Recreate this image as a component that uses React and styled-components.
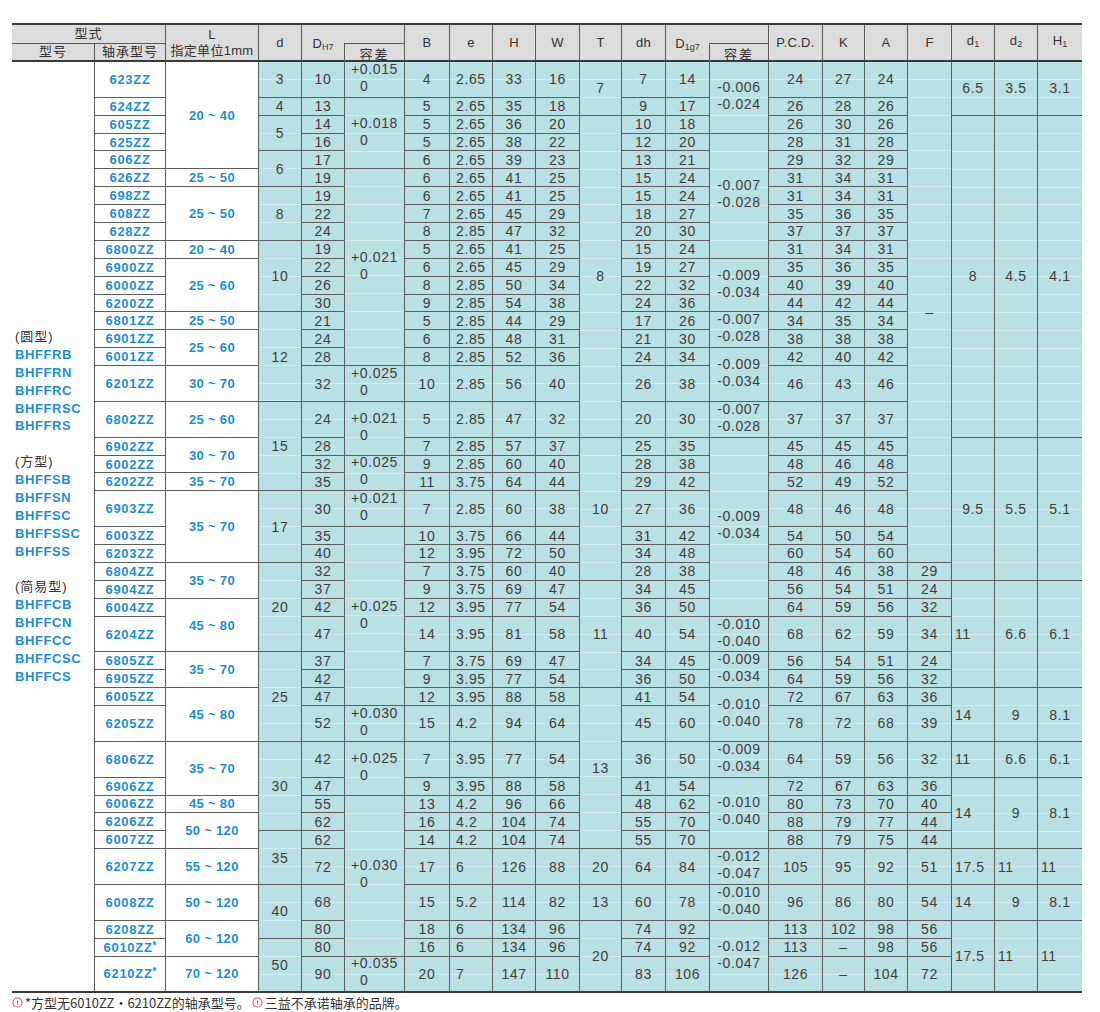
import React from 'react';
import styled, { createGlobalStyle } from 'styled-components';
import { CircleAlert } from 'lucide-react';

const GlobalStyle = createGlobalStyle`
  body {
    margin: 0;
    background: #fff;
    font-family: "Liberation Sans", "Noto Sans CJK SC", sans-serif;
  }
`;

// column widths in px, left to right (型号 … H1)
const COLS = [83, 71, 93, 43, 43, 60, 45, 43, 43, 44, 42, 44, 44, 59, 54, 42, 43, 44, 43, 43, 44];
const TRACKS = COLS.map((w, i) => `${i < COLS.length - 1 ? w - 1 : w}px`).join(' ');

const UNIT = 16.9; // one data line, the 1px gap makes it 17.9
const DOUBLES = [1, 17, 18, 22, 28, 32, 33, 38, 39, 42];

const START = [0];
let u = 1;
for (let r = 1; r <= 42; r++) {
  START[r] = u;
  u += DOUBLES.includes(r) ? 2 : 1;
}
START[43] = u;
const rows = (r, n = 1) => `${START[r]} / ${START[r + n]}`;

const MODELS = ['623ZZ', '624ZZ', '605ZZ', '625ZZ', '606ZZ', '626ZZ', '698ZZ', '608ZZ', '628ZZ', '6800ZZ', '6900ZZ', '6000ZZ', '6200ZZ', '6801ZZ', '6901ZZ', '6001ZZ', '6201ZZ', '6802ZZ', '6902ZZ', '6002ZZ', '6202ZZ', '6903ZZ', '6003ZZ', '6203ZZ', '6804ZZ', '6904ZZ', '6004ZZ', '6204ZZ', '6805ZZ', '6905ZZ', '6005ZZ', '6205ZZ', '6806ZZ', '6906ZZ', '6006ZZ', '6206ZZ', '6007ZZ', '6207ZZ', '6008ZZ', '6208ZZ', '6010ZZ*', '6210ZZ*'];

const L_RANGES = [[5, '20 ~ 40'], [1, '25 ~ 50'], [3, '25 ~ 50'], [1, '20 ~ 40'], [3, '25 ~ 60'], [1, '25 ~ 50'], [2, '25 ~ 60'], [1, '30 ~ 70'], [1, '25 ~ 60'], [2, '30 ~ 70'], [1, '35 ~ 70'], [3, '35 ~ 70'], [2, '35 ~ 70'], [2, '45 ~ 80'], [2, '35 ~ 70'], [2, '45 ~ 80'], [2, '35 ~ 70'], [1, '45 ~ 80'], [2, '50 ~ 120'], [1, '55 ~ 120'], [1, '50 ~ 120'], [2, '60 ~ 120'], [1, '70 ~ 120']];

const D = [[1, 3], [1, 4], [2, 5], [2, 6], [3, 8], [4, 10], [4, 12], [4, 15], [3, 17], [4, 20], [4, 25], [4, 30], [2, 35], [2, 40], [2, 50]];
const TOL_H7 = [[1, '+0.015'], [4, '+0.018'], [11, '+0.021'], [1, '+0.025'], [2, '+0.021'], [2, '+0.025'], [1, '+0.021'], [9, '+0.025'], [1, '+0.030'], [2, '+0.025'], [7, '+0.030'], [1, '+0.035']];
const T = [[2, 7], [16, 8], [7, 10], [5, 11], [7, 13], [1, 20], [1, 13], [3, 20]];
const TOL_G7 = [[3, '006', '024'], [7, '007', '028'], [3, '009', '034'], [2, '007', '028'], [2, '009', '034'], [1, '007', '028'], [9, '009', '034'], [1, '010', '040'], [2, '009', '034'], [2, '010', '040'], [1, '009', '034'], [4, '010', '040'], [1, '012', '047'], [1, '010', '040'], [3, '012', '047']];
const F_VALUES = [29, 24, 32, 34, 24, 32, 36, 39, 32, 36, 40, 44, 44, 51, 54, 56, 56, 72];
const SMALL = [[2, '6.5', '3.5', '3.1'], [16, '8', '4.5', '4.1'], [7, '9.5', '5.5', '5.1'], [5, '11', '6.6', '6.1'], [2, '14', '9', '8.1'], [1, '11', '6.6', '6.1'], [4, '14', '9', '8.1'], [1, '17.5', '11', '11'], [1, '14', '9', '8.1'], [3, '17.5', '11', '11']];

const PER_ROW = [
  { col: 5, vals: [10, 13, 14, 16, 17, 19, 19, 22, 24, 19, 22, 26, 30, 21, 24, 28, 32, 24, 28, 32, 35, 30, 35, 40, 32, 37, 42, 47, 37, 42, 47, 52, 42, 47, 55, 62, 62, 72, 68, 80, 80, 90] },
  { col: 7, vals: [4, 5, 5, 5, 6, 6, 6, 7, 8, 5, 6, 8, 9, 5, 6, 8, 10, 5, 7, 9, 11, 7, 10, 12, 7, 9, 12, 14, 7, 9, 12, 15, 7, 9, 13, 16, 14, 17, 15, 18, 16, 20] },
  { col: 8, pad: 6, vals: ['2.65', '2.65', '2.65', '2.65', '2.65', '2.65', '2.65', '2.65', '2.85', '2.65', '2.65', '2.85', '2.85', '2.85', '2.85', '2.85', '2.85', '2.85', '2.85', '2.85', '3.75', '2.85', '3.75', '3.95', '3.75', '3.75', '3.95', '3.95', '3.75', '3.95', '3.95', '4.2', '3.95', '3.95', '4.2', '4.2', '4.2', '6', '5.2', '6', '6', '7'] },
  { col: 9, vals: [33, 35, 36, 38, 39, 41, 41, 45, 47, 41, 45, 50, 54, 44, 48, 52, 56, 47, 57, 60, 64, 60, 66, 72, 60, 69, 77, 81, 69, 77, 88, 94, 77, 88, 96, 104, 104, 126, 114, 134, 134, 147] },
  { col: 10, vals: [16, 18, 20, 22, 23, 25, 25, 29, 32, 25, 29, 34, 38, 29, 31, 36, 40, 32, 37, 40, 44, 38, 44, 50, 40, 47, 54, 58, 47, 54, 58, 64, 54, 58, 66, 74, 74, 88, 82, 96, 96, 110] },
  { col: 12, vals: [7, 9, 10, 12, 13, 15, 15, 18, 20, 15, 19, 22, 24, 17, 21, 24, 26, 20, 25, 28, 29, 27, 31, 34, 28, 34, 36, 40, 34, 36, 41, 45, 36, 41, 48, 55, 55, 64, 60, 74, 74, 83] },
  { col: 13, vals: [14, 17, 18, 20, 21, 24, 24, 27, 30, 24, 27, 32, 36, 26, 30, 34, 38, 30, 35, 38, 42, 36, 42, 48, 38, 45, 50, 54, 45, 50, 54, 60, 50, 54, 62, 70, 70, 84, 78, 92, 92, 106] },
  { col: 15, vals: [24, 26, 26, 28, 29, 31, 31, 35, 37, 31, 35, 40, 44, 34, 38, 42, 46, 37, 45, 48, 52, 48, 54, 60, 48, 56, 64, 68, 56, 64, 72, 78, 64, 72, 80, 88, 88, 105, 96, 113, 113, 126] },
  { col: 16, vals: [27, 28, 30, 31, 32, 34, 34, 36, 37, 34, 36, 39, 42, 35, 38, 40, 43, 37, 45, 46, 49, 46, 50, 54, 46, 54, 59, 62, 54, 59, 67, 72, 59, 67, 73, 79, 79, 95, 86, 102, '–', '–'] },
  { col: 17, vals: [24, 26, 26, 28, 29, 31, 31, 35, 37, 31, 35, 40, 44, 34, 38, 42, 46, 37, 45, 48, 52, 48, 54, 60, 38, 51, 56, 59, 51, 56, 63, 68, 56, 63, 70, 77, 75, 92, 80, 98, 98, 104] },
];

const TYPE_LINES = [
  ['(圆型)', false], ['BHFFRB', true], ['BHFFRN', true], ['BHFFRC', true], ['BHFFRSC', true], ['BHFFRS', true], ['', false],
  ['(方型)', false], ['BHFFSB', true], ['BHFFSN', true], ['BHFFSC', true], ['BHFFSSC', true], ['BHFFSS', true], ['', false],
  ['(简易型)', false], ['BHFFCB', true], ['BHFFCN', true], ['BHFFCC', true], ['BHFFCSC', true], ['BHFFCS', true],
];

const Page = styled.div`
  padding: 23px 0 0 12px;
  width: 1070px;
`;

const HeadGrid = styled.div`
  display: grid;
  grid-template-columns: ${TRACKS};
  grid-template-rows: 18px 16px;
  gap: 1px;
  background: #5a5a5a;
  border-top: 2px solid #3a3a3a;
  border-bottom: 2px solid #3a3a3a;
`;

const HeadCell = styled.div`
  grid-column: ${p => p.$c};
  grid-row: ${p => p.$r};
  background: #dcdcdc;
  display: flex;
  flex-direction: column;
  align-items: center;
  justify-content: center;
  font-size: 13px;
  color: #333;
  line-height: 16px;
  letter-spacing: ${p => (p.$cjk ? '1px' : '0.3px')};
  white-space: nowrap;
`;

const HeadSplit = styled.div`
  grid-column: ${p => p.$c};
  grid-row: 1 / 3;
  background: #dcdcdc;
  display: grid;
  grid-template-columns: ${p => p.$w}px 1fr;
  grid-template-rows: 18px 1fr;
  font-size: 13px;
  color: #333;
`;

const SplitLabel = styled.div`
  grid-column: 1;
  grid-row: 1 / 3;
  display: flex;
  align-items: center;
  justify-content: center;
`;

const SplitBox = styled.div`
  grid-column: 2;
  grid-row: 2;
  border-left: 1px solid #5a5a5a;
  border-top: 1px solid #5a5a5a;
  display: flex;
  align-items: center;
  justify-content: center;
  letter-spacing: 2px;
`;

const Sub = styled.sub`
  font-size: 9px;
  vertical-align: -2px;
  letter-spacing: 0;
`;

const BodyGrid = styled.div`
  display: grid;
  grid-template-columns: ${TRACKS};
  grid-template-rows: repeat(52, ${UNIT}px);
  gap: 1px;
  background: #5e5e5e;
  border-bottom: 2px solid #3a3a3a;
`;

const TypeCell = styled.div`
  grid-column: 1;
  grid-row: 1 / 53;
  background: #fff;
  padding: 266px 0 0 3px;
`;

const TypeLine = styled.div`
  height: 17.9px;
  line-height: 17.9px;
  font-size: 13px;
  white-space: nowrap;
  color: ${p => (p.$code ? '#1c8fd2' : '#333')};
  font-weight: ${p => (p.$code ? 700 : 400)};
  letter-spacing: ${p => (p.$code ? '0.6px' : '1px')};
`;

const WhiteCell = styled.div`
  grid-column: ${p => p.$c};
  grid-row: ${p => p.$r};
  background: #fff;
  display: flex;
  align-items: center;
  justify-content: center;
  color: #1c8fd2;
  font-size: 13px;
  font-weight: 700;
  letter-spacing: ${p => (p.$tight ? '0.3px' : '0.7px')};
  white-space: nowrap;
`;

const Star = styled.span`
  font-size: 10px;
  position: relative;
  top: -3px;
  letter-spacing: 0;
`;

const Cell = styled.div`
  grid-column: ${p => p.$c};
  grid-row: ${p => p.$r};
  background-color: #b8e0e5;
  background-image: repeating-linear-gradient(
    to bottom,
    transparent 0,
    transparent ${UNIT}px,
    rgba(255, 255, 255, 0.35) ${UNIT}px,
    rgba(255, 255, 255, 0.35) ${UNIT + 1}px
  );
  display: flex;
  align-items: center;
  justify-content: ${p => (p.$pad != null ? 'flex-start' : 'center')};
  padding-left: ${p => p.$pad || 0}px;
  font-size: 14px;
  color: #3e3e3e;
  letter-spacing: 0.6px;
  white-space: nowrap;
`;

const Tol = styled.div`
  line-height: 17px;
  margin-top: -3px;
`;

const TolLine = styled.div`
  padding-left: ${p => (p.$indent ? 9 : 0)}px;
`;

const Note = styled.div`
  display: flex;
  align-items: center;
  gap: 2px;
  height: 16px;
  margin-top: 1px;
  font-family: "Noto Sans CJK SC", "Liberation Sans", sans-serif;
  font-size: 13px;
  color: #333;
  white-space: nowrap;
  svg {
    color: #e2457d;
    flex: none;
  }
`;

function merged(list, col, render) {
  const out = [];
  let r = 1;
  list.forEach((item, i) => {
    out.push(render(item, r, `${col}-${i}`));
    r += item[0];
  });
  return out;
}

function TolText({ top, bottom }) {
  return (
    <Tol>
      <TolLine>{top}</TolLine>
      <TolLine $indent={bottom === '0'}>{bottom}</TolLine>
    </Tol>
  );
}

function Header() {
  return (
    <HeadGrid>
      <HeadCell $c="1 / 3" $r="1" $cjk>型式</HeadCell>
      <HeadCell $c="1" $r="2" $cjk>型号</HeadCell>
      <HeadCell $c="2" $r="2" $cjk>轴承型号</HeadCell>
      <HeadCell $c="3" $r="1 / 3">
        <span>L</span>
        <span>指定单位1mm</span>
      </HeadCell>
      <HeadCell $c="4" $r="1 / 3">d</HeadCell>
      <HeadSplit $c="5 / 7" $w={42}>
        <SplitLabel><span>D<Sub>H7</Sub></span></SplitLabel>
        <SplitBox>容差</SplitBox>
      </HeadSplit>
      <HeadCell $c="7" $r="1 / 3">B</HeadCell>
      <HeadCell $c="8" $r="1 / 3">e</HeadCell>
      <HeadCell $c="9" $r="1 / 3">H</HeadCell>
      <HeadCell $c="10" $r="1 / 3">W</HeadCell>
      <HeadCell $c="11" $r="1 / 3">T</HeadCell>
      <HeadCell $c="12" $r="1 / 3">dh</HeadCell>
      <HeadSplit $c="13 / 15" $w={43}>
        <SplitLabel><span>D<Sub>1g7</Sub></span></SplitLabel>
        <SplitBox>容差</SplitBox>
      </HeadSplit>
      <HeadCell $c="15" $r="1 / 3">P.C.D.</HeadCell>
      <HeadCell $c="16" $r="1 / 3">K</HeadCell>
      <HeadCell $c="17" $r="1 / 3">A</HeadCell>
      <HeadCell $c="18" $r="1 / 3">F</HeadCell>
      <HeadCell $c="19" $r="1 / 3"><span>d<Sub>1</Sub></span></HeadCell>
      <HeadCell $c="20" $r="1 / 3"><span>d<Sub>2</Sub></span></HeadCell>
      <HeadCell $c="21" $r="1 / 3"><span>H<Sub>1</Sub></span></HeadCell>
    </HeadGrid>
  );
}

function Body() {
  const cells = [];

  cells.push(
    <TypeCell key="type">
      {TYPE_LINES.map(([text, code], i) => (
        <TypeLine key={i} $code={code}>{text}</TypeLine>
      ))}
    </TypeCell>
  );

  MODELS.forEach((m, i) => {
    const star = m.endsWith('*');
    cells.push(
      <WhiteCell key={`m-${i}`} $c={2} $r={rows(i + 1)}>
        <span>
          {star ? m.slice(0, -1) : m}
          {star && <Star>*</Star>}
        </span>
      </WhiteCell>
    );
  });

  cells.push(...merged(L_RANGES, 3, ([n, text], r, key) => (
    <WhiteCell key={key} $c={3} $r={rows(r, n)} $tight>{text}</WhiteCell>
  )));

  cells.push(...merged(D, 4, ([n, v], r, key) => (
    <Cell key={key} $c={4} $r={rows(r, n)}>{v}</Cell>
  )));

  cells.push(...merged(TOL_H7, 6, ([n, v], r, key) => (
    <Cell key={key} $c={6} $r={rows(r, n)}><TolText top={v} bottom="0" /></Cell>
  )));

  cells.push(...merged(T, 11, ([n, v], r, key) => (
    <Cell key={key} $c={11} $r={rows(r, n)}>{v}</Cell>
  )));

  cells.push(...merged(TOL_G7, 14, ([n, a, b], r, key) => (
    <Cell key={key} $c={14} $r={rows(r, n)}><TolText top={`-0.${a}`} bottom={`-0.${b}`} /></Cell>
  )));

  cells.push(<Cell key="f-dash" $c={18} $r={rows(1, 24)}>–</Cell>);
  F_VALUES.forEach((v, i) => {
    cells.push(<Cell key={`f-${i}`} $c={18} $r={rows(25 + i)}>{v}</Cell>);
  });

  cells.push(...merged(SMALL, 19, ([n, d1, d2, h1], r, key) => [
    <Cell key={`${key}a`} $c={19} $r={rows(r, n)} $pad={r >= 26 ? 3 : undefined}>{d1}</Cell>,
    <Cell key={`${key}b`} $c={20} $r={rows(r, n)} $pad={d2 === '11' ? 3 : undefined}>{d2}</Cell>,
    <Cell key={`${key}c`} $c={21} $r={rows(r, n)} $pad={h1 === '11' ? 3 : undefined}>{h1}</Cell>,
  ]).flat());

  PER_ROW.forEach(({ col, vals, pad }) => {
    vals.forEach((v, i) => {
      cells.push(<Cell key={`${col}-${i}`} $c={col} $r={rows(i + 1)} $pad={pad}>{v}</Cell>);
    });
  });

  return <BodyGrid>{cells}</BodyGrid>;
}

export default function App() {
  return (
    <>
      <GlobalStyle />
      <Page>
        <Header />
        <Body />
        <Note>
          <CircleAlert size={11} strokeWidth={2.2} />
          <span>*方型无6010ZZ・6210ZZ的轴承型号。</span>
          <CircleAlert size={11} strokeWidth={2.2} />
          <span>三益不承诺轴承的品牌。</span>
        </Note>
      </Page>
    </>
  );
}
